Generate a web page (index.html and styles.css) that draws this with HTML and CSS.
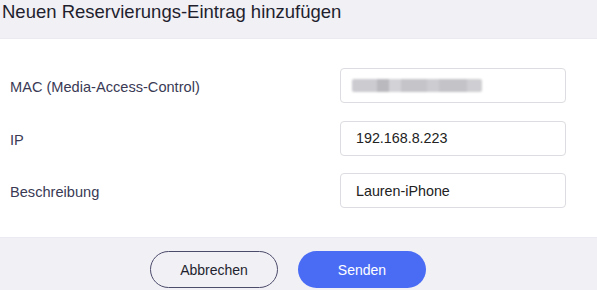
FILE: index.html
```html
<!DOCTYPE html>
<html lang="de">
<head>
    <meta charset="UTF-8">
    <meta name="viewport" content="width=device-width, initial-scale=1.0">
    <title>Reservierung hinzufügen</title>
    <link rel="stylesheet" href="styles.css">
</head>
<body>
    <div class="dialog">
        <div class="dialog-header">Neuen Reservierungs-Eintrag hinzufügen</div>

        <div class="dialog-body">
            <div class="form-row">
                <label class="form-label">MAC (Media-Access-Control)</label>
                <div class="input-field">
                    <!-- MAC ist unkenntlich gemacht -->
                    <span class="blurred"></span>
                </div>
            </div>
            <div class="form-row">
                <label class="form-label">IP</label>
                <div class="input-field">192.168.8.223</div>
            </div>
            <div class="form-row">
                <label class="form-label">Beschreibung</label>
                <div class="input-field">Lauren-iPhone</div>
            </div>
        </div>

        <div class="dialog-footer">
            <button class="btn btn-cancel">Abbrechen</button>
            <button class="btn btn-send">Senden</button>
        </div>
    </div>
</body>
</html>
```

FILE: styles.css
```css
/* Allgemein */
body {
    margin: 0;
    font-family: "Liberation Sans", Arial, sans-serif;
    background-color: #fff;
}

.dialog {
    width: 597px;
    height: 290px;
    display: flex;
    flex-direction: column;
    overflow: hidden;
}

/* Kopfzeile */
.dialog-header {
    height: 39px;
    flex-shrink: 0;
    box-sizing: border-box;
    padding: 1px 0 0 2px;
    background-color: #f1f0f5;
    color: #1f1f2e;
    font-size: 18.5px;
    line-height: 22px;
    border-bottom: 1px solid #ebeaf0;
}

/* Formular */
.dialog-body {
    flex: 1;
    padding: 29px 0 0 10px;
    display: flex;
    flex-direction: column;
    gap: 17.5px;
}

.form-row {
    display: flex;
    align-items: center;
}

.form-label {
    width: 330px;
    padding-top: 3px;
    font-size: 14.6px;
    color: #3a3a55;
}

.input-field {
    width: 226px;
    height: 35px;
    box-sizing: border-box;
    border: 1px solid #dcdce2;
    border-radius: 4px;
    padding: 0 15px;
    display: flex;
    align-items: center;
    font-size: 14.3px;
    color: #222;
}

.blurred {
    display: block;
    width: 130px;
    height: 13px;
    margin-left: -4px;
    background: linear-gradient(90deg,
        #cbcbd0 0, #cbcbd0 25px,
        #b9b9be 25px, #b9b9be 37px,
        #d3d3d7 37px, #d3d3d7 49px,
        #c4c4c9 49px, #c4c4c9 75px,
        #cdcdd1 75px, #cdcdd1 87px,
        #c3c3c8 87px, #c3c3c8 115px,
        #cfcfd3 115px, #cfcfd3 130px);
    filter: blur(0.8px);
    border-radius: 2px;
}

/* Fußzeile */
.dialog-footer {
    height: 53px;
    flex-shrink: 0;
    box-sizing: border-box;
    background-color: #f1f0f5;
    border-top: 1px solid #ebeaf0;
    display: flex;
    justify-content: center;
    align-items: flex-start;
    padding: 13px 21px 0 0;
    gap: 20px;
}

.btn {
    width: 128px;
    height: 37px;
    border-radius: 19px;
    font-family: "Liberation Sans", Arial, sans-serif;
    font-size: 14px;
    cursor: pointer;
}

.btn-cancel {
    background-color: #f1f0f5;
    border: 1.5px solid #4b4b6b;
    color: #1f1f2e;
}

.btn-send {
    background-color: #4a6cf5;
    border: none;
    color: #fff;
}
```
